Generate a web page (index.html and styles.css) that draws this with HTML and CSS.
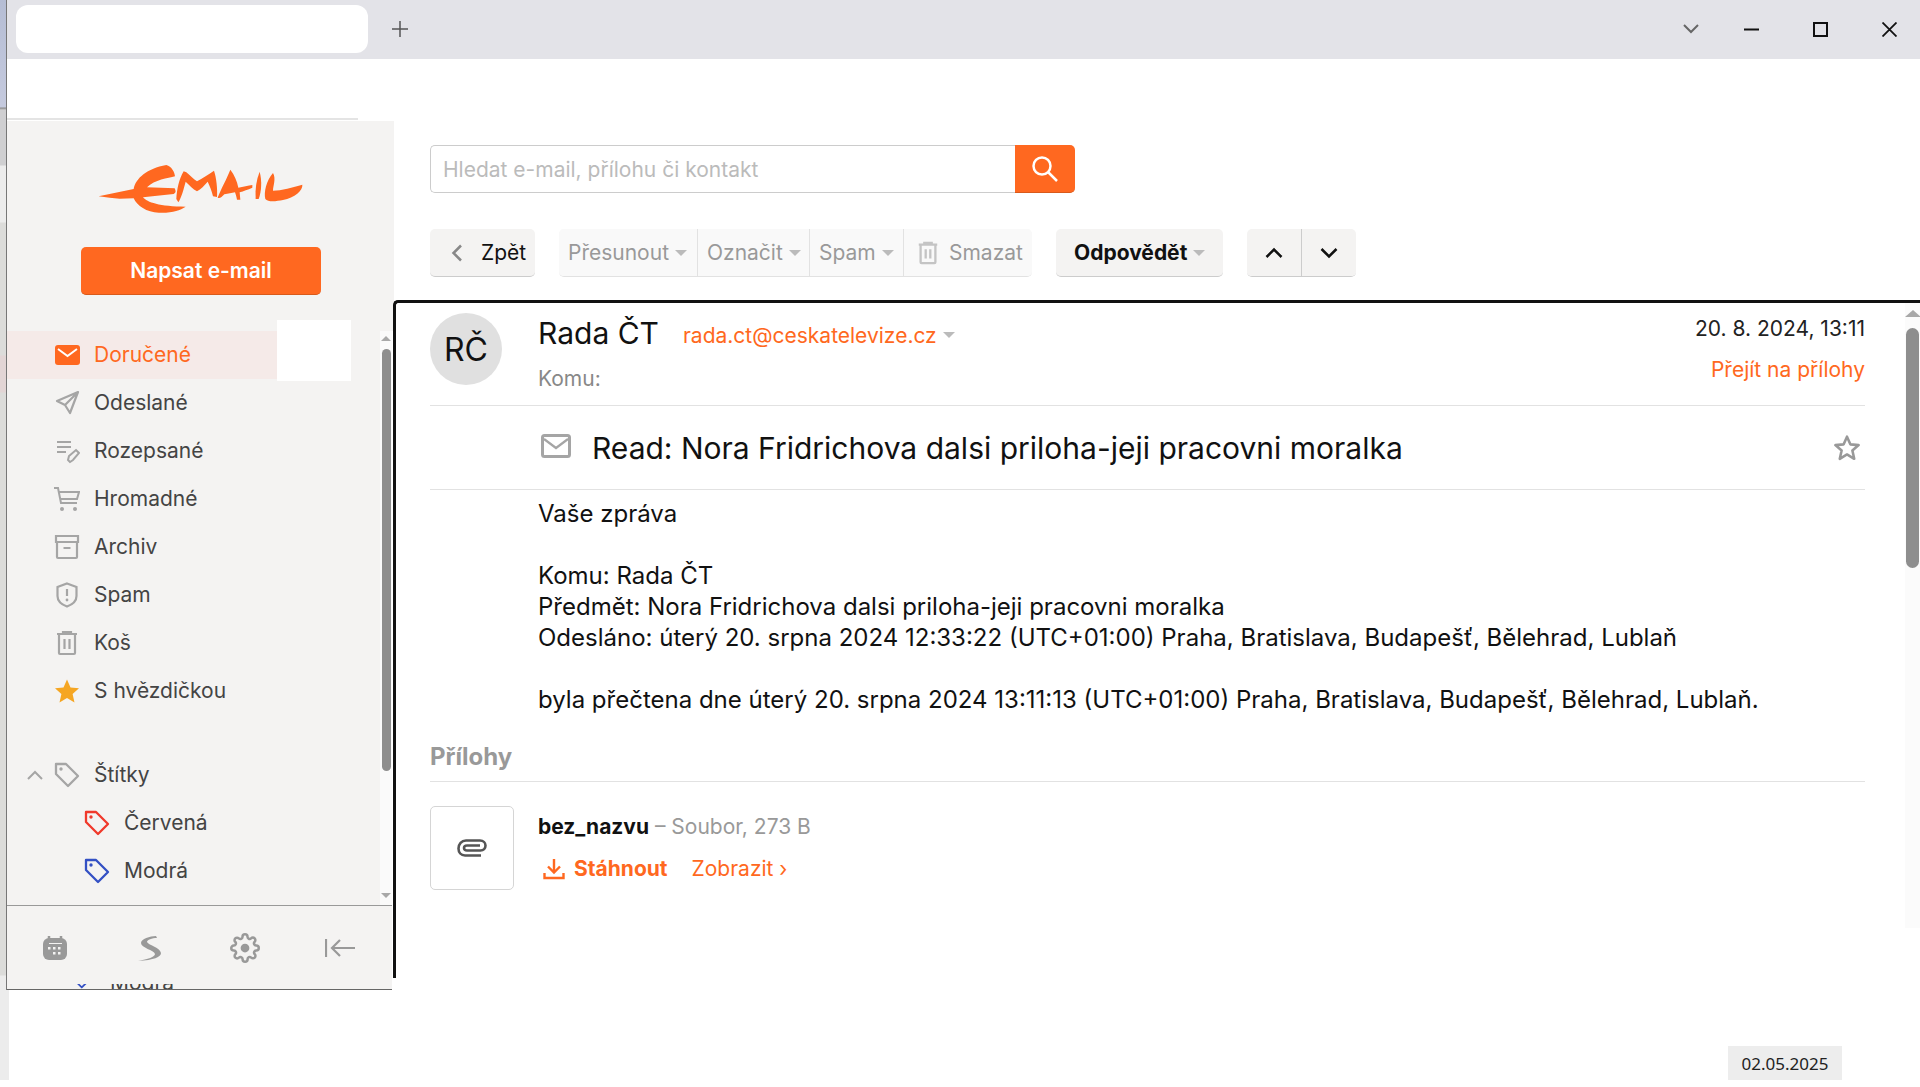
FILE: index.html
```html
<!DOCTYPE html>
<html lang="cs">
<head>
<meta charset="utf-8">
<title>Email</title>
<link rel="stylesheet" href="styles.css">
</head>
<body>
<div class="shell">
  <div class="strip"></div>
  <div class="desk">
    <header class="tabbar">
      <div class="tab"></div>
      <svg class="tab-plus" width="16" height="16" viewBox="0 0 16 16"><path d="M8 0v16M0 8h16" fill="none" stroke="#555" stroke-width="1.5"/></svg>
      <div class="win-controls">
        <svg width="16" height="10" viewBox="0 0 16 10"><path d="M1 1l7 7 7-7" fill="none" stroke="#666" stroke-width="2"/></svg>
        <svg class="win-min" width="15" height="3" viewBox="0 0 15 3"><path d="M0 1.5h15" stroke="#111" stroke-width="2"/></svg>
        <svg class="win-max" width="15" height="15" viewBox="0 0 15 15"><rect x="1" y="1" width="13" height="13" fill="none" stroke="#111" stroke-width="2"/></svg>
        <svg class="win-close" width="15" height="15" viewBox="0 0 15 15"><path d="M.5.5l14 14M14.5.5l-14 14" fill="none" stroke="#111" stroke-width="1.8"/></svg>
      </div>
    </header>

    <div class="workspace">
      <aside class="sidecol">
        <div class="side-rule"></div>
        <div class="side-head">
          <svg class="logo" width="206" height="50" viewBox="115 75 618 150">
            <g fill="#ff6820">
              <path d="M117 172L222 150C228 118 262 88 320 78C336 82 345 100 346 112C325 118 285 122 262 145L345 148C350 158 348 162 342 165L250 175C262 190 300 203 378 203C360 214 340 222 300 221C262 222 232 200 222 178L180 179L150 176Z"/>
              <path d="M350 180C352 150 358 120 372 97L380 100C392 110 402 122 412 127C428 118 448 105 463 95C470 115 474 150 472 174L460 172C456 155 450 140 444 128C434 140 424 150 412 157C400 150 388 138 378 128C372 150 366 175 356 190Z"/>
              <path d="M474 176C484 150 502 118 512 92C524 108 532 125 536 146C550 143 566 140 578 138L578 146C564 152 552 156 540 160L542 182L532 182C530 172 528 165 526 160C516 162 506 164 494 166C486 174 480 180 474 176Z"/>
              <path d="M588 180C586 150 590 122 600 98C607 125 606 155 597 180Z"/>
              <path d="M640 102C650 120 640 140 640 155C665 155 700 145 728 137C730 155 705 175 670 183C650 187 625 190 617 180C612 160 620 125 640 102Z"/>
            </g>
          </svg>
          <button class="compose">Napsat e-mail</button>
        </div>

        <div class="side-body">
          <nav class="nav">
            <div class="nav-patch"></div>
            <a class="nav-row is-active">
              <svg class="ic" viewBox="0 0 26 26"><rect x="1" y="3" width="25" height="20" rx="3" fill="#ff6820"/><path d="M4 7l9.5 7L23 7" fill="none" stroke="#fff" stroke-width="2"/></svg>
              <span>Doručené</span>
            </a>
            <a class="nav-row">
              <svg class="ic" viewBox="0 0 26 26"><path d="M24 2L3 11l8 4 5 8zM11 15L24 2" fill="none" stroke="#a5a5a5" stroke-width="2.2" stroke-linejoin="round"/></svg>
              <span>Odeslané</span>
            </a>
            <a class="nav-row">
              <svg class="ic" viewBox="0 0 26 26"><path d="M3 4h14M3 9h14M3 14h9" fill="none" stroke="#a5a5a5" stroke-width="2"/><path d="M16 24l-2-2 1-4 7-6 3 3-6 7z" fill="none" stroke="#a5a5a5" stroke-width="2"/></svg>
              <span>Rozepsané</span>
            </a>
            <a class="nav-row">
              <svg class="ic" viewBox="0 0 26 26"><path d="M0 2h4l3 15h16M5.500 6H25l-2 7H7" fill="none" stroke="#a5a5a5" stroke-width="2"/><circle cx="8" cy="23" r="2" fill="#a5a5a5"/><circle cx="21" cy="23" r="2" fill="#a5a5a5"/></svg>
              <span>Hromadné</span>
            </a>
            <a class="nav-row">
              <svg class="ic" viewBox="0 0 26 26"><path d="M2 2h22v6H2zM3 8v15a1 1 0 0 0 1 1h18a1 1 0 0 0 1-1V8M9.500 14h7" fill="none" stroke="#a5a5a5" stroke-width="2.200"/></svg>
              <span>Archiv</span>
            </a>
            <a class="nav-row">
              <svg class="ic" viewBox="0 0 26 26"><path d="M13 1.500l9.500 3.500v9c0 5-4 8.500-9.500 10.500C7.500 22.500 3.500 19 3.500 14V5z" fill="none" stroke="#a5a5a5" stroke-width="2.200"/><path d="M13 7v7" stroke="#a5a5a5" stroke-width="2.200"/><circle cx="13" cy="18" r="1.400" fill="#a5a5a5"/></svg>
              <span>Spam</span>
            </a>
            <a class="nav-row">
              <svg class="ic" viewBox="0 0 26 26"><path d="M3 4h20M9 4V2h8v2M5 4v19a1 1 0 0 0 1 1h14a1 1 0 0 0 1-1V4M10.500 9v10M15.500 9v10" fill="none" stroke="#a5a5a5" stroke-width="2.200"/></svg>
              <span>Koš</span>
            </a>
            <a class="nav-row">
              <svg class="ic" viewBox="0 0 26 26"><path d="M13 1.500l3.500 8 8.500.8-6.400 5.700 1.900 8.500L13 20l-7.500 4.500 1.900-8.500L1 10.300l8.500-.8z" fill="#f5a623"/></svg>
              <span>S hvězdičkou</span>
            </a>
            <a class="nav-row nav-labels">
              <svg class="ic-chev" viewBox="0 0 16 10" width="16" height="10"><path d="M1 9l7-7 7 7" fill="none" stroke="#a5a5a5" stroke-width="2"/></svg>
              <svg class="ic" viewBox="0 0 26 26"><use href="#tag" stroke="#a5a5a5" fill="#a5a5a5"/></svg>
              <span>Štítky</span>
            </a>
            <a class="nav-row nav-child">
              <svg class="ic" viewBox="0 0 26 26"><use href="#tag" stroke="#f0392b" fill="#f0392b"/></svg>
              <span>Červená</span>
            </a>
            <a class="nav-row nav-child">
              <svg class="ic" viewBox="0 0 26 26"><use href="#tag" stroke="#3350c4" fill="#3350c4"/></svg>
              <span>Modrá</span>
            </a>
          </nav>
          <div class="side-scroll">
            <span class="arrow-up small"></span>
            <span class="side-thumb"></span>
            <span class="arrow-down small"></span>
          </div>
        </div>

        <div class="side-tools">
          <span class="tool"><svg width="26" height="26" viewBox="0 0 26 26"><rect x="1" y="3" width="24" height="22" rx="6" fill="#999"/><path d="M7 1v4M19 1v4" stroke="#999" stroke-width="2.500"/><path d="M7 8h13v1H7zM6 12h2.500v2.500H6zM11 12h2.500v2.500H11zM16 12h2.500v2.500H16zM11 17h2.500v2.500H11zM16 17h2.500v2.500H16z" fill="#f4f3f2"/></svg></span>
          <span class="tool"><svg width="24" height="26" viewBox="0 0 24 26"><path d="M3 8C3 4 12 1 18 1L19 3C14 3 9 5 9 7C10 10 22 12 23 18C23 22 16 25 0 26C10 24 17 22 17 19C16 15 3 13 3 8Z" fill="#999"/></svg></span>
          <span class="tool"><svg width="30" height="30" viewBox="0 0 24 24"><circle cx="12" cy="12" r="3.500" fill="#999"/><path d="M19.400 15a1.650 1.650 0 0 0 .33 1.820l.06.06a2 2 0 0 1 0 2.830 2 2 0 0 1-2.830 0l-.06-.06a1.650 1.650 0 0 0-1.820-.33 1.650 1.650 0 0 0-1 1.510V21a2 2 0 0 1-2 2 2 2 0 0 1-2-2v-.09A1.650 1.650 0 0 0 9 19.400a1.650 1.650 0 0 0-1.820.33l-.06.06a2 2 0 0 1-2.830 0 2 2 0 0 1 0-2.830l.06-.06a1.650 1.650 0 0 0 .33-1.820 1.650 1.650 0 0 0-1.510-1H3a2 2 0 0 1-2-2 2 2 0 0 1 2-2h.09A1.650 1.650 0 0 0 4.600 9a1.650 1.650 0 0 0-.33-1.820l-.06-.06a2 2 0 0 1 0-2.830 2 2 0 0 1 2.830 0l.06.06a1.650 1.650 0 0 0 1.820.33H9a1.650 1.650 0 0 0 1-1.510V3a2 2 0 0 1 2-2 2 2 0 0 1 2 2v.09a1.650 1.650 0 0 0 1 1.510 1.650 1.650 0 0 0 1.820-.33l.06-.06a2 2 0 0 1 2.830 0 2 2 0 0 1 0 2.830l-.06.06a1.650 1.650 0 0 0-.33 1.820V9a1.650 1.650 0 0 0 1.510 1H21a2 2 0 0 1 2 2 2 2 0 0 1-2 2h-.09a1.650 1.650 0 0 0-1.510 1z" fill="none" stroke="#999" stroke-width="2"/></svg></span>
          <span class="tool"><svg width="30" height="20" viewBox="0 0 30 20"><path d="M1 1v18M30 10H7M15 2l-8 8 8 8" fill="none" stroke="#999" stroke-width="2.200"/></svg></span>
        </div>
        <div class="side-peek">
          <svg class="peek-ic" viewBox="0 0 26 26"><use href="#tag" stroke="#3350c4" fill="#3350c4"/></svg>
          <span>Modrá</span>
        </div>
      </aside>

      <main class="main">
        <form class="search">
          <input class="search-input" type="text" placeholder="Hledat e-mail, přílohu či kontakt">
          <span class="search-btn"><svg width="28" height="28" viewBox="0 0 28 28"><circle cx="11" cy="11" r="8.500" fill="none" stroke="#fff" stroke-width="2.500"/><path d="M17 17l9 9" stroke="#fff" stroke-width="2.500"/></svg></span>
        </form>

        <div class="toolbar">
          <button class="btn btn-back"><svg width="12" height="18" viewBox="0 0 12 18"><path d="M10 1.500L2.500 9l7.500 7.500" fill="none" stroke="#888" stroke-width="2.500"/></svg><span>Zpět</span></button>
          <div class="btn-group is-off">
            <button class="seg seg-move">Přesunout<i class="caret"></i></button>
            <button class="seg seg-flag">Označit<i class="caret"></i></button>
            <button class="seg seg-spam">Spam<i class="caret"></i></button>
            <button class="seg seg-del"><svg width="24" height="26" viewBox="0 0 26 26"><path d="M3 4h20M9 4V2h8v2M5 4v19a1 1 0 0 0 1 1h14a1 1 0 0 0 1-1V4M10.500 9v10M15.500 9v10" fill="none" stroke="#c4c4c4" stroke-width="2.500"/></svg>Smazat</button>
          </div>
          <button class="btn btn-reply">Odpovědět<i class="caret"></i></button>
          <div class="btn-pair">
            <button class="pair-btn"><svg width="18" height="12" viewBox="0 0 18 12"><path d="M1.500 10L9 2.500 16.500 10" fill="none" stroke="#111" stroke-width="2.500"/></svg></button>
            <button class="pair-btn"><svg width="18" height="12" viewBox="0 0 18 12"><path d="M1.500 2L9 9.500 16.500 2" fill="none" stroke="#111" stroke-width="2.500"/></svg></button>
          </div>
        </div>

        <section class="panel">
          <div class="message">
            <div class="msg-head">
              <div class="avatar">RČ</div>
              <div class="sender">
                <div class="sender-top">
                  <span class="sender-name">Rada ČT</span>
                  <a class="sender-mail">rada.ct@ceskatelevize.cz</a><i class="caret sender-caret"></i>
                </div>
                <div class="sender-to">Komu:</div>
              </div>
              <div class="msg-meta">
                <div class="msg-date">20. 8. 2024, 13:11</div>
                <a class="msg-jump">Přejít na přílohy</a>
              </div>
            </div>
            <div class="subject">
              <svg class="subject-ic" width="30" height="24" viewBox="0 0 30 24"><rect x="1.500" y="1.500" width="27" height="21" rx="2" fill="none" stroke="#a5a5a5" stroke-width="3"/><path d="M3 5l12 9 12-9" fill="none" stroke="#a5a5a5" stroke-width="2.200"/></svg>
              <h1>Read: Nora Fridrichova dalsi priloha-jeji pracovni moralka</h1>
              <svg class="subject-star" width="28" height="28" viewBox="0 0 26 26"><path d="M13 2.500l3.100 7.100 7.700.7-5.800 5.100 1.700 7.600L13 19l-6.700 4 1.700-7.600-5.800-5.100 7.700-.7z" fill="none" stroke="#999" stroke-width="2.400" stroke-linejoin="round"/></svg>
            </div>
            <div class="msg-body">Vaše zpráva

Komu: Rada ČT
Předmět: Nora Fridrichova dalsi priloha-jeji pracovni moralka
Odesláno: úterý 20. srpna 2024 12:33:22 (UTC+01:00) Praha, Bratislava, Budapešť, Bělehrad, Lublaň

byla přečtena dne úterý 20. srpna 2024 13:11:13 (UTC+01:00) Praha, Bratislava, Budapešť, Bělehrad, Lublaň.</div>
            <h2 class="att-title">Přílohy</h2>
            <div class="attachment">
              <div class="att-thumb"><svg width="30" height="18" viewBox="0 0 30 18"><path d="M24 16.500H8C4 16.500 1.500 13.500 1.500 9.500C1.500 5 4.500 1.500 9 1.500H23C26.500 1.500 28.500 4 28.500 6.500C28.500 9.500 26.500 11.500 23.500 11.500H10C8 11.500 7 10.500 7 9C7 7.500 8 6.500 10 6.500H23" fill="none" stroke="#555" stroke-width="2.600"/></svg></div>
              <div class="att-info">
                <div class="att-name"><strong>bez_nazvu</strong> – Soubor, 273 B</div>
                <div class="att-actions">
                  <a class="att-dl"><svg width="22" height="22" viewBox="0 0 22 22"><path d="M11 1v13M5 8.500l6 6 6-6M1.500 15v5h19v-5" fill="none" stroke="#ff6820" stroke-width="2.400"/></svg>Stáhnout</a>
                  <a class="att-view">Zobrazit ›</a>
                </div>
              </div>
            </div>
          </div>
          <div class="main-scroll">
            <span class="arrow-up"></span>
            <span class="main-thumb"></span>
          </div>
        </section>
      </main>
    </div>

    <footer class="stamp-row"><span class="stamp">02.05.2025</span></footer>
  </div>
</div>
<svg class="defs" width="0" height="0"><defs><g id="tag"><path d="M2 2h10l12 12-10 10L2 12z" fill="none" stroke-width="2.300" stroke-linejoin="round"/><circle cx="7" cy="7" r="1.700" stroke="none"/></g></defs></svg>
</body>
</html>
```

FILE: styles.css
```css
* { box-sizing: border-box; }
html, body { margin: 0; padding: 0; background: #fff; }
body { width: 1920px; height: 1087px; overflow: hidden; font-family: Inter, "Noto Sans", sans-serif; font-size: 21px; color: #111; }
button { font: inherit; border: 0; padding: 0; }
a { color: inherit; text-decoration: none; }
.defs { display: block; }

.shell { display: flex; height: 1087px; }
.strip { width: 9px; margin-right: -2px; height: 1080px; flex: none;
  background:
    linear-gradient(#777, #777) left 6px top 0 / 1px 990px no-repeat,
    linear-gradient(#b5bdd4 0, #c5cade 107px, #8a8a8a 108px, #cfcfd1 110px, #cfcfd1 165px, #ececec 166px, #ececec 222px, #dcdcda 223px, #dcdcda 355px, #e2d5d5 356px, #e2d5d5 392px, #dcdcda 393px, #dcdcda 975px, #ececec 976px) left top / 7px 990px no-repeat,
    linear-gradient(#ececec, #ececec) left 0 top 990px / 9px 90px no-repeat; }
.desk { flex: 1; min-width: 0; display: flex; flex-direction: column; }

.tabbar { height: 59px; flex: none; background: #e3e3e8; display: flex; align-items: center; padding: 0 0 1px 9px; }
.tab { width: 352px; height: 48px; background: #fff; border-radius: 12px; }
.tab-plus { margin-left: 24px; }
.win-controls { margin-left: auto; display: flex; align-items: center; padding-right: 23px; }
.win-min { margin-left: 45px; }
.win-max { margin-left: 54px; }
.win-close { margin-left: 54px; }

.workspace { display: flex; height: 931px; flex: none; }
.sidecol { width: 386px; flex: none; padding-top: 59px; display: flex; flex-direction: column; }
.side-rule { width: 351px; height: 2px; background: #e4e4e4; margin-bottom: 1px; }
.side-head { width: 387px; height: 210px; background: #f4f3f2; padding: 43px 0 0 74px; }
.logo { display: block; margin-left: 17px; }
.compose { display: block; width: 240px; height: 48px; margin-top: 33px; background: #ff6820; color: #fff; font-weight: 600; border-radius: 5px; border-bottom: 1px solid #d85a1c; }

.side-body { width: 385px; height: 574px; display: flex; background: #f4f3f2; }
.nav { position: relative; flex: 1; }
.nav-patch { position: absolute; left: 270px; top: -11px; width: 74px; height: 61px; background: #fff; }
.nav-row { display: flex; align-items: center; height: 48px; padding-left: 47px; gap: 14px; color: #444; line-height: 24px; }
.nav-row span { margin-top: -1px; }
.nav-row.is-active { width: 270px; background: #f5eae8; color: #ff6820; }
.ic { width: 26px; height: 26px; flex: none; }
.nav-labels { margin-top: 36px; padding-left: 20px; }
.ic-chev { margin-right: -3px; flex: none; }
.nav-child { padding-left: 77px; }
.side-scroll { width: 12px; background: #fafafa; display: flex; flex-direction: column; align-items: center; padding: 5px 0; }
.side-thumb { width: 9px; height: 422px; margin-top: 8px; border-radius: 5px; background: #8e8e8e; }
.side-scroll .arrow-down { margin-top: auto; margin-bottom: 2px; }
.arrow-up, .arrow-down { display: block; width: 0; height: 0; border-left: 8px solid transparent; border-right: 8px solid transparent; }
.arrow-up { border-bottom: 7px solid #a8a8a8; }
.arrow-down { border-top: 7px solid #a8a8a8; }
.arrow-up.small, .arrow-down.small { border-left-width: 5px; border-right-width: 5px; border-bottom-width: 5px; border-top-width: 5px; }
.arrow-up.small { border-top: 0; }
.arrow-down.small { border-bottom: 0; }

.side-tools { width: 385px; height: 79px; padding-right: 5px; display: flex; background: #f4f3f2; border-top: 1px solid #999; }
.tool { flex: 1; display: flex; align-items: center; justify-content: center; padding-top: 6px; }
.side-peek { width: 385px; height: 6px; overflow: hidden; background: #f4f3f2; border-bottom: 1px solid #666; display: flex; align-items: flex-end; padding-left: 64px; gap: 19px; color: #444; line-height: 24px; }
.peek-ic { width: 20px; height: 20px; flex: none; }
.side-peek span { margin-bottom: -6px; flex: none; }

.main { flex: 1; min-width: 0; padding-top: 86px; display: flex; flex-direction: column; }
.search { display: flex; margin: 0 0 0 37px; width: 645px; height: 48px; }
.search-input { flex: 1; min-width: 0; height: 48px; border: 1px solid #ccc; border-right: 0; border-radius: 5px 0 0 5px; padding: 0 12px; font: inherit; color: #111; outline: 0; }
.search-input::placeholder { color: #bbb; opacity: 1; }
.search-btn { width: 60px; background: #ff6820; border-radius: 0 5px 5px 0; display: flex; align-items: center; justify-content: center; border-bottom: 1px solid #d85a1c; }

.toolbar { display: flex; margin: 36px 0 0 37px; height: 48px; }
.btn, .seg, .pair-btn { height: 48px; background: #f4f3f2; color: #111; display: flex; align-items: center; cursor: pointer; }
.btn, .btn-pair, .btn-group { border-radius: 5px; border-bottom: 1px solid #ccc; }
.btn-back { width: 105px; padding-left: 21px; gap: 18px; }
.btn-group { display: flex; margin-left: 24px; width: 473px; overflow: hidden; border-bottom-color: #e2e2e2; background: #f9f9f9; }
.seg { background: #f9f9f9; color: #999; padding-left: 9px; border-right: 1px solid #e2e2e2; height: 47px; }
.seg-move { width: 139px; }
.seg-flag { width: 112px; }
.seg-spam { width: 94px; }
.seg-del { width: 128px; border-right: 0; gap: 9px; padding-left: 12px; }
.caret { display: inline-block; width: 0; height: 0; border-left: 6px solid transparent; border-right: 6px solid transparent; border-top: 6px solid #bbb; margin-left: 6px; }
.btn-reply { width: 167px; margin-left: 24px; padding-left: 18px; font-weight: 700; }
.btn-pair { display: flex; margin-left: 24px; width: 109px; overflow: hidden; }
.pair-btn { height: 47px; flex: 1; justify-content: center; }
.pair-btn + .pair-btn { border-left: 1px solid #ccc; }

.panel { margin-top: 23px; height: 678px; display: flex; border-top: 3px solid #111; border-left: 3px solid #111; border-top-left-radius: 5px; }
.message { width: 1469px; padding-left: 34px; flex: none; }
.msg-head { height: 103px; border-bottom: 1px solid #e2e2e2; display: flex; padding-top: 10px; }
.avatar { width: 72px; height: 72px; border-radius: 50%; background: #e0e0e0; color: #111; font-size: 32px; display: flex; align-items: center; justify-content: center; flex: none; }
.sender { margin-left: 36px; flex: 1; }
.sender-top { display: flex; align-items: center; height: 40px; }
.sender-name { font-size: 30px; color: #111; }
.sender-mail { margin: 4px 0 0 24px; color: #ff6820; }
.sender-caret { margin-top: 4px; }
.sender-to { color: #888; margin-top: 14px; line-height: 24px; }
.msg-meta { text-align: right; line-height: 24px; padding-top: 4px; }
.msg-date { color: #222; }
.msg-jump { display: block; margin-top: 17px; color: #ff6820; }
.subject { height: 84px; border-bottom: 1px solid #e2e2e2; display: flex; align-items: center; padding-left: 111px; }
.subject-ic { flex: none; margin-top: -4px; }
.subject h1 { margin: 0 0 0 21px; font-size: 30px; font-weight: 400; flex: 1; color: #111; }
.subject-star { flex: none; margin-right: 4px; }
.msg-body { padding-left: 108px; margin-top: 8px; white-space: pre-line; font-size: 24px; line-height: 31px; color: #111; }
.att-title { margin: 26px 0 0; height: 41px; line-height: 31px; font-size: 24px; font-weight: 700; color: #999; border-bottom: 1px solid #e2e2e2; }
.attachment { display: flex; margin-top: 24px; }
.att-thumb { width: 84px; height: 84px; border: 1px solid #d5d5d5; border-radius: 5px; display: flex; align-items: center; justify-content: center; flex: none; }
.att-info { margin-left: 24px; padding-top: 9px; }
.att-name { color: #999; line-height: 24px; }
.att-name strong { color: #111; font-weight: 700; }
.att-actions { display: flex; margin-top: 18px; color: #ff6820; line-height: 24px; padding-left: 5px; }
.att-dl { display: flex; align-items: center; gap: 9px; font-weight: 700; }
.att-view { margin-left: 24px; }
.main-scroll { margin-left: 40px; width: 15px; height: 625px; background: #fbfbfb; display: flex; flex-direction: column; align-items: center; padding-top: 7px; }
.main-thumb { width: 13px; height: 240px; margin-top: 11px; border-radius: 7px; background: #8e8e8e; }

.stamp-row { display: flex; justify-content: flex-end; padding-right: 78px; margin-top: 56px; }
.stamp { width: 114px; height: 34px; background: #ededed; font-family: "Noto Sans", sans-serif; font-size: 17px; line-height: 35px; text-align: center; color: #222; }
```
